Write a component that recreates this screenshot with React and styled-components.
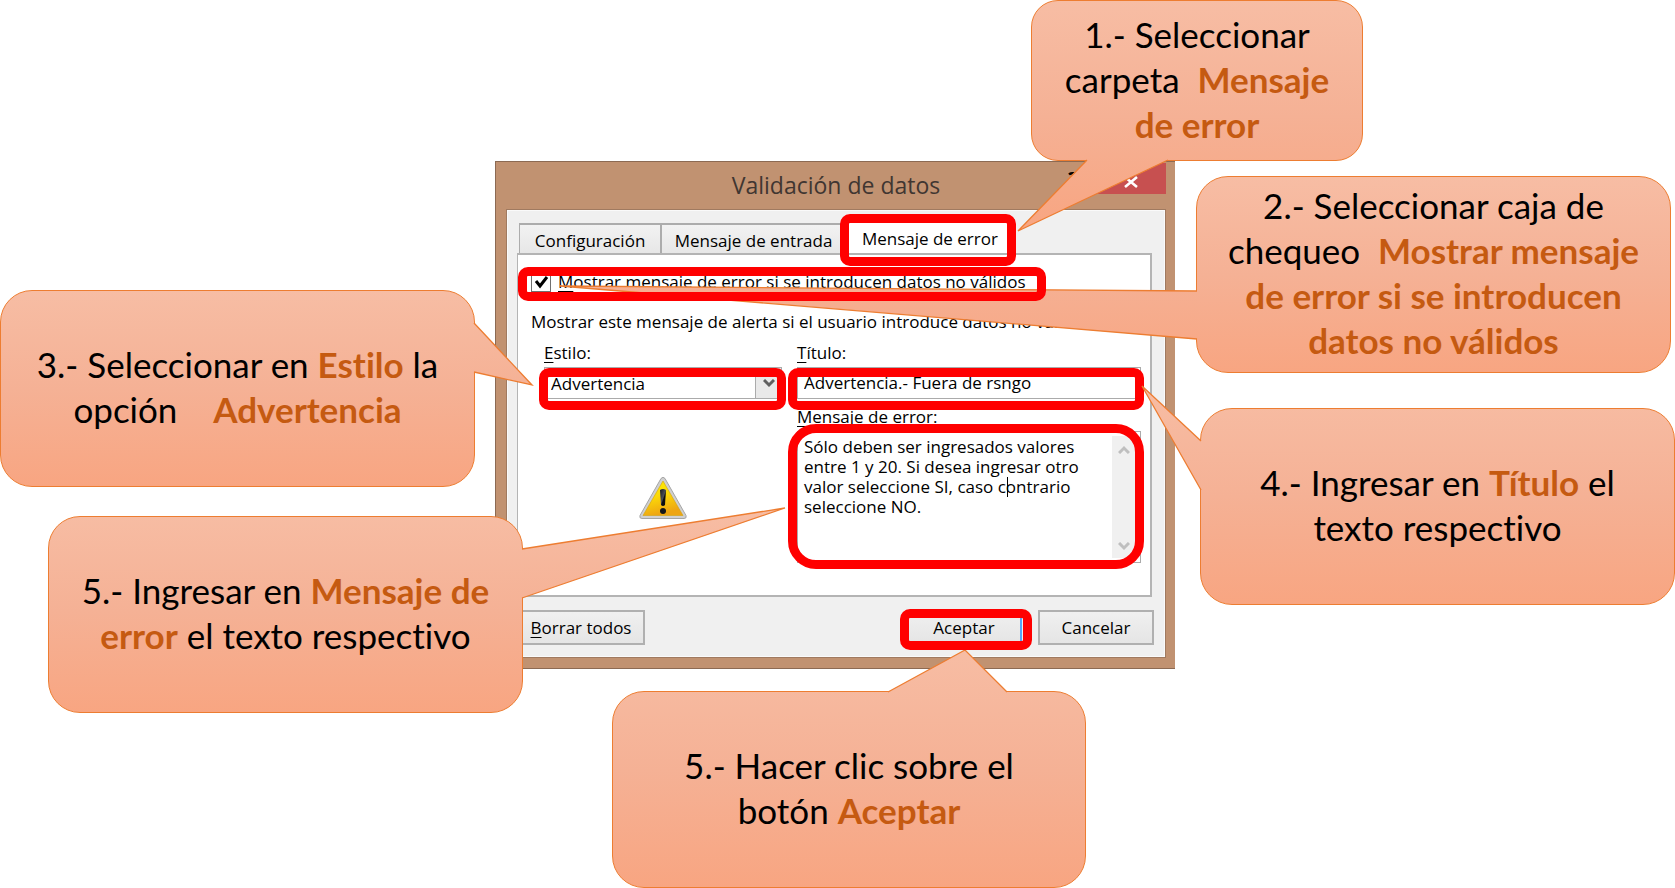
import { createGlobalStyle, styled } from "styled-components";

const BOARD = 1675;
const pct = (n) => `${(n / BOARD) * 100}%`;

const GlobalStyle = createGlobalStyle`
  *, *::before, *::after {
    box-sizing: border-box;
  }

  body {
    margin: 0;
    background-color: #ffffff;
    font-family: "Open Sans", "Noto Sans", sans-serif;
    font-size: 17px;
    line-height: 20px;
    color: #000000;
  }

  button, input, select, textarea {
    font: inherit;
    color: inherit;
  }
`;

const Board = styled.main`
  position: relative;
  display: grid;
  grid-template-columns: 495fr 680fr 500fr;
  align-items: start;
  min-height: 100vh;
  padding-top: 161px;
  overflow: hidden;
`;

/* ---------- dialog ---------- */

const Window = styled.section`
  grid-column: 2;
  padding: 0 9px 10px 10px;
  background-color: #c19271;
  border: 1px solid #8c6a53;
  border-right: none;
`;

const TitleBar = styled.header`
  display: grid;
  grid-template-columns: 1fr auto 1fr;
  align-items: start;
  height: 47px;
`;

const WindowTitle = styled.h1`
  grid-column: 2;
  margin: 0;
  padding-top: 7px;
  font-size: 23px;
  font-weight: 400;
  line-height: 32px;
  color: #403631;
`;

const WindowButtons = styled.div`
  display: flex;
  justify-content: flex-end;
  padding-top: 1px;
`;

const HelpButton = styled.button`
  width: 46px;
  height: 31px;
  padding: 0;
  border: none;
  background: none;
  font-size: 20px;
  font-weight: 700;
`;

const CloseButton = styled.button`
  display: flex;
  align-items: center;
  justify-content: center;
  width: 70px;
  height: 31px;
  padding: 6px 0 0;
  border: none;
  background-color: #c75050;
`;

const Client = styled.div`
  padding: 9px 13px 12px 10px;
  background-color: #f0f0f0;
  border: 1px solid #a07a60;
  box-shadow: inset 0 0 0 1px #fafafa;
`;

const Tabs = styled.div`
  display: flex;
  align-items: flex-end;
  padding-left: 2px;
`;

const Tab = styled.button`
  position: relative;
  flex: ${({ $grow }) => $grow} 0 0;
  height: ${({ $active }) => ($active ? 34 : 30)}px;
  padding: 3px 0 0;
  border: 2px solid #acacac;
  border-left-width: ${({ $active }) => ($active ? 0 : 1)}px;
  border-right-width: 1px;
  border-bottom: none;
  background: ${({ $active }) => ($active ? "#ffffff" : "linear-gradient(#f2f2f2, #e7e7e7)")};
  white-space: nowrap;
`;

const TabSpace = styled.div`
  flex: 138 0 0;
`;

const Panel = styled.div`
  padding: 14px 9px 24px 26px;
  background-color: #ffffff;
  border: 2px solid #b4b4b4;
  border-left-width: 1px;
`;

const CheckRow = styled.label`
  position: relative;
  display: flex;
  align-items: center;
  gap: 7px;
  height: 30px;
  margin-left: -13px;
  padding-bottom: 4px;
  white-space: nowrap;
`;

const CheckBox = styled.input`
  appearance: none;
  width: 20px;
  height: 20px;
  margin: 0;
  border: 1px solid #707070;
  background: #ffffff;
`;

const CheckMark = styled.svg`
  position: absolute;
  left: 3px;
  top: 6px;
`;

const Hint = styled.p`
  margin: 13px 0 11px -13px;
  white-space: nowrap;
`;

const Key = styled.u`
  text-underline-offset: 3px;
`;

const Fields = styled.div`
  display: grid;
  grid-template-columns: 238fr 344fr;
  column-gap: 15px;
`;

const Column = styled.div`
  display: flex;
  flex-direction: column;
`;

const FieldLabel = styled.label`
  height: 24px;
`;

const Field = styled.div`
  position: relative;
  display: flex;
  height: ${({ $tall }) => ($tall ? 132 : 32)}px;
  border: 1px solid #ababab;
  margin-bottom: 8px;
`;

const Select = styled.select`
  appearance: none;
  flex: 1;
  min-width: 0;
  padding: 2px 0 0 6px;
  border: none;
  background: #ffffff;
`;

const Arrow = styled.span`
  display: flex;
  align-items: center;
  justify-content: center;
  width: 26px;
  border-left: 1px solid #ababab;
  background-color: #e9e9e9;
`;

const TextInput = styled.input`
  flex: 1;
  min-width: 0;
  padding: 0 0 0 6px;
  border: none;
`;

const TextArea = styled.textarea`
  flex: 1;
  min-width: 0;
  padding: 5px 0 0 6px;
  border: none;
  outline: none;
  resize: none;
  overflow: hidden;
  white-space: pre;
`;

const Caret = styled.span`
  position: absolute;
  left: 209px;
  top: 45px;
  width: 1px;
  height: 20px;
  background-color: #000000;
`;

const ScrollBar = styled.div`
  display: flex;
  flex-direction: column;
  justify-content: space-between;
  align-items: center;
  width: 24px;
  margin: 4px;
  padding: 9px 0 7px;
  background-color: #f0f0f0;
`;

const WarningBox = styled.div`
  display: flex;
  justify-content: center;
  padding-top: 69px;
`;

const Footer = styled.footer`
  display: flex;
  gap: 16px;
  margin-right: -2px;
  padding-top: 13px;
`;

const PushButton = styled.button`
  position: relative;
  width: ${({ $wide }) => ($wide ? 128 : 116)}px;
  height: 35px;
  padding: 0;
  margin-right: ${({ $wide }) => ($wide ? "auto" : 0)};
  border: 2px solid ${({ $focus }) => ($focus ? "#57a5f5" : "#b0b0b0")};
  background: linear-gradient(#f0f0f0, #e5e5e5);
`;

/* ---------- marks drawn over the dialog ---------- */

const Frame = styled.span`
  position: absolute;
  z-index: 2;
  inset: ${({ $inset }) => $inset};
  border: 9px solid #ff0000;
  border-radius: ${({ $round }) => ($round ? 28 : 10)}px;
  pointer-events: none;
`;

const Bubble = styled.aside`
  position: absolute;
  z-index: ${({ $front }) => ($front ? 3 : 1)};
  left: ${({ $x }) => pct($x)};
  top: ${({ $y }) => $y}px;
  display: flex;
  flex-direction: column;
  justify-content: center;
  width: ${({ $w }) => pct($w)};
  height: ${({ $h }) => $h}px;
  padding-bottom: 3px;
  border: 1px solid #ed7d31;
  border-radius: ${({ $h }) => ($h < 180 ? 27 : 32)}px;
  background: linear-gradient(
    #f7bda4 ${({ $from }) => $from}px,
    #f5b195 ${({ $from, $to }) => ($from + $to) / 2}px,
    #f8a581 ${({ $to }) => $to}px
  );
  font-family: Lato, Carlito, Calibri, sans-serif;
  font-size: 35px;
  font-variant-ligatures: none;
  line-height: 45px;
  text-align: center;
  white-space: pre;

  strong {
    color: #c55a11;
  }
`;

const Tail = styled.svg`
  position: absolute;
  left: -1px;
  top: -1px;
  width: calc(100% + 2px);
  height: calc(100% + 2px);
  overflow: visible;
  pointer-events: none;
`;

function Callout({ id, x, y, w, h, tail, front, children }) {
  const ys = tail.map((p) => p[1]);
  const from = Math.min(0, ...ys);
  const to = Math.max(h, ...ys);
  const points = tail.map((p) => p.join(",")).join(" ");
  return (
    <Bubble $x={x} $y={y} $w={w} $h={h} $from={from} $to={to} $front={front}>
      <Tail viewBox={`0 0 ${w} ${h}`} preserveAspectRatio="none" aria-hidden="true">
        <defs>
          <linearGradient id={id} gradientUnits="userSpaceOnUse" x1="0" x2="0" y1={from} y2={to}>
            <stop offset="0" stopColor="#f7bda4" />
            <stop offset="0.5" stopColor="#f5b195" />
            <stop offset="1" stopColor="#f8a581" />
          </linearGradient>
        </defs>
        <polygon points={points} fill={`url(#${id})`} />
        <polyline points={points} fill="none" stroke="#ed7d31" strokeWidth="1.3" />
      </Tail>
      {children}
    </Bubble>
  );
}

function Chevron({ up, color = "#606060" }) {
  return (
    <svg width="12" height="9" viewBox="0 0 12 9" aria-hidden="true">
      <path d={up ? "M1 8 6 3l5 5" : "M1 1l5 5 5-5"} fill="none" stroke={color} strokeWidth="3" />
    </svg>
  );
}

function WarningIcon() {
  return (
    <svg width="50" height="44" viewBox="0 0 50 44" role="img" aria-label="Advertencia">
      <defs>
        <linearGradient id="warn" x1="0" x2="0.3" y1="0" y2="1">
          <stop offset="0" stopColor="#ffee00" />
          <stop offset="0.5" stopColor="#fbd908" />
          <stop offset="1" stopColor="#eea512" />
        </linearGradient>
        <linearGradient id="bang" x1="0" x2="1" y1="0" y2="1">
          <stop offset="0" stopColor="#14181f" />
          <stop offset="0.5" stopColor="#4c5056" />
          <stop offset="0.6" stopColor="#0b0d10" />
        </linearGradient>
      </defs>
      <path
        d="M23 2.5Q25 0 27 2.5L48 39.5Q49 42.5 46 42.5H4Q1 42.5 2 39.5Z"
        fill="#d0d0d0"
        stroke="#a5a5a5"
      />
      <path d="M25 5 45 39.5H5Z" fill="url(#warn)" stroke="#d3a30b" strokeWidth="0.6" />
      <path d="M22 14q3-2 6 0l-1 15q-2 2-4 0z" fill="url(#bang)" />
      <circle cx="25" cy="35" r="3" fill="#14171b" />
    </svg>
  );
}

const MESSAGE = `Sólo deben ser ingresados valores
entre 1 y 20. Si desea ingresar otro
valor seleccione SI, caso contrario
seleccione NO.`;

function ValidationDialog() {
  return (
    <Window aria-label="Validación de datos">
      <TitleBar>
        <WindowTitle>Validación de datos</WindowTitle>
        <WindowButtons>
          <HelpButton type="button" aria-label="Ayuda">?</HelpButton>
          <CloseButton type="button" aria-label="Cerrar">
            <svg width="14" height="12" viewBox="0 0 14 12" aria-hidden="true">
              <path d="M1 1l12 10M13 1 1 11" stroke="#ffffff" strokeWidth="2.6" />
            </svg>
          </CloseButton>
        </WindowButtons>
      </TitleBar>
      <Client>
        <Tabs role="tablist">
          <Tab type="button" role="tab" $grow={141}>Configuración</Tab>
          <Tab type="button" role="tab" $grow={184}>Mensaje de entrada</Tab>
          <Tab type="button" role="tab" aria-selected="true" $grow={169} $active>
            Mensaje de error
            <Frame $inset="-7px -2px -13px -6px" />
          </Tab>
          <TabSpace />
        </Tabs>
        <Panel>
          <CheckRow>
            <CheckBox type="checkbox" defaultChecked />
            <CheckMark width="15" height="14" viewBox="0 0 15 14" aria-hidden="true">
              <path d="M2 6l4 5L13 2" fill="none" stroke="#000000" strokeWidth="3" />
            </CheckMark>
            <span>
              <Key>M</Key>ostrar mensaje de error si se introducen datos no válidos
            </span>
            <Frame $inset="-2px 95px -2px -13px" />
          </CheckRow>
          <Hint>Mostrar este mensaje de alerta si el usuario introduce datos no válidos:</Hint>
          <Fields>
            <Column>
              <FieldLabel htmlFor="estilo">
                <Key>E</Key>stilo:
              </FieldLabel>
              <Field>
                <Select id="estilo" defaultValue="Advertencia">
                  <option>Detener</option>
                  <option>Advertencia</option>
                  <option>Información</option>
                </Select>
                <Arrow>
                  <Chevron />
                </Arrow>
                <Frame $inset="0 -5px -12px -6px" />
              </Field>
              <WarningBox>
                <WarningIcon />
              </WarningBox>
            </Column>
            <Column>
              <FieldLabel htmlFor="titulo">
                <Key>T</Key>ítulo:
              </FieldLabel>
              <Field>
                <TextInput id="titulo" defaultValue="Advertencia.- Fuera de rsngo" />
                <Frame $inset="0 -4px -12px -10px" />
              </Field>
              <FieldLabel htmlFor="mensaje">
                <Key>M</Key>ensaje de error:
              </FieldLabel>
              <Field $tall>
                <TextArea id="mensaje" defaultValue={MESSAGE} />
                <Caret />
                <ScrollBar aria-hidden="true">
                  <Chevron up color="#bfbfbf" />
                  <Chevron color="#bfbfbf" />
                </ScrollBar>
                <Frame $inset="-8px -4px -7px -10px" $round />
              </Field>
            </Column>
          </Fields>
        </Panel>
        <Footer>
          <PushButton type="button" $wide>
            <Key>B</Key>orrar todos
          </PushButton>
          <PushButton type="button" $focus>
            Aceptar
            <Frame $inset="-3px -12px -7px -8px" />
          </PushButton>
          <PushButton type="button">Cancelar</PushButton>
        </Footer>
      </Client>
    </Window>
  );
}

export default function App() {
  return (
    <>
      <GlobalStyle />
      <Board>
        <ValidationDialog />

        <Callout id="paso1" x={1031} y={0} w={332} h={161} tail={[[56, 160], [-13, 231], [137, 160]]}>
          <span>1.- Seleccionar</span>
          <span>carpeta  <strong>Mensaje</strong></span>
          <strong>de error</strong>
        </Callout>

        <Callout id="paso2" x={1196} y={176} w={475} h={197} tail={[[1, 115], [-636, 110], [1, 163]]}>
          <span>2.- Seleccionar caja de</span>
          <span>chequeo  <strong>Mostrar mensaje</strong></span>
          <strong>de error si se introducen</strong>
          <strong>datos no válidos</strong>
        </Callout>

        <Callout id="paso3" x={0} y={290} w={475} h={197} tail={[[474, 33], [532, 95], [474, 82]]}>
          <span>3.- Seleccionar en <strong>Estilo</strong> la</span>
          <span>opción    <strong>Advertencia</strong></span>
        </Callout>

        <Callout id="paso4" x={1200} y={408} w={475} h={197} front tail={[[1, 33], [-58, -22], [1, 82]]}>
          <span>4.- Ingresar en <strong>Título</strong> el</span>
          <span>texto respectivo</span>
        </Callout>

        <Callout id="paso5" x={48} y={516} w={475} h={197} tail={[[474, 33], [737, -8], [474, 82]]}>
          <span>5.- Ingresar en <strong>Mensaje de</strong></span>
          <span><strong>error</strong> el texto respectivo</span>
        </Callout>

        <Callout id="paso6" x={612} y={691} w={474} h={197} tail={[[276, 1], [353, -41], [395, 1]]}>
          <span>5.- Hacer clic sobre el</span>
          <span>botón <strong>Aceptar</strong></span>
        </Callout>
      </Board>
    </>
  );
}
